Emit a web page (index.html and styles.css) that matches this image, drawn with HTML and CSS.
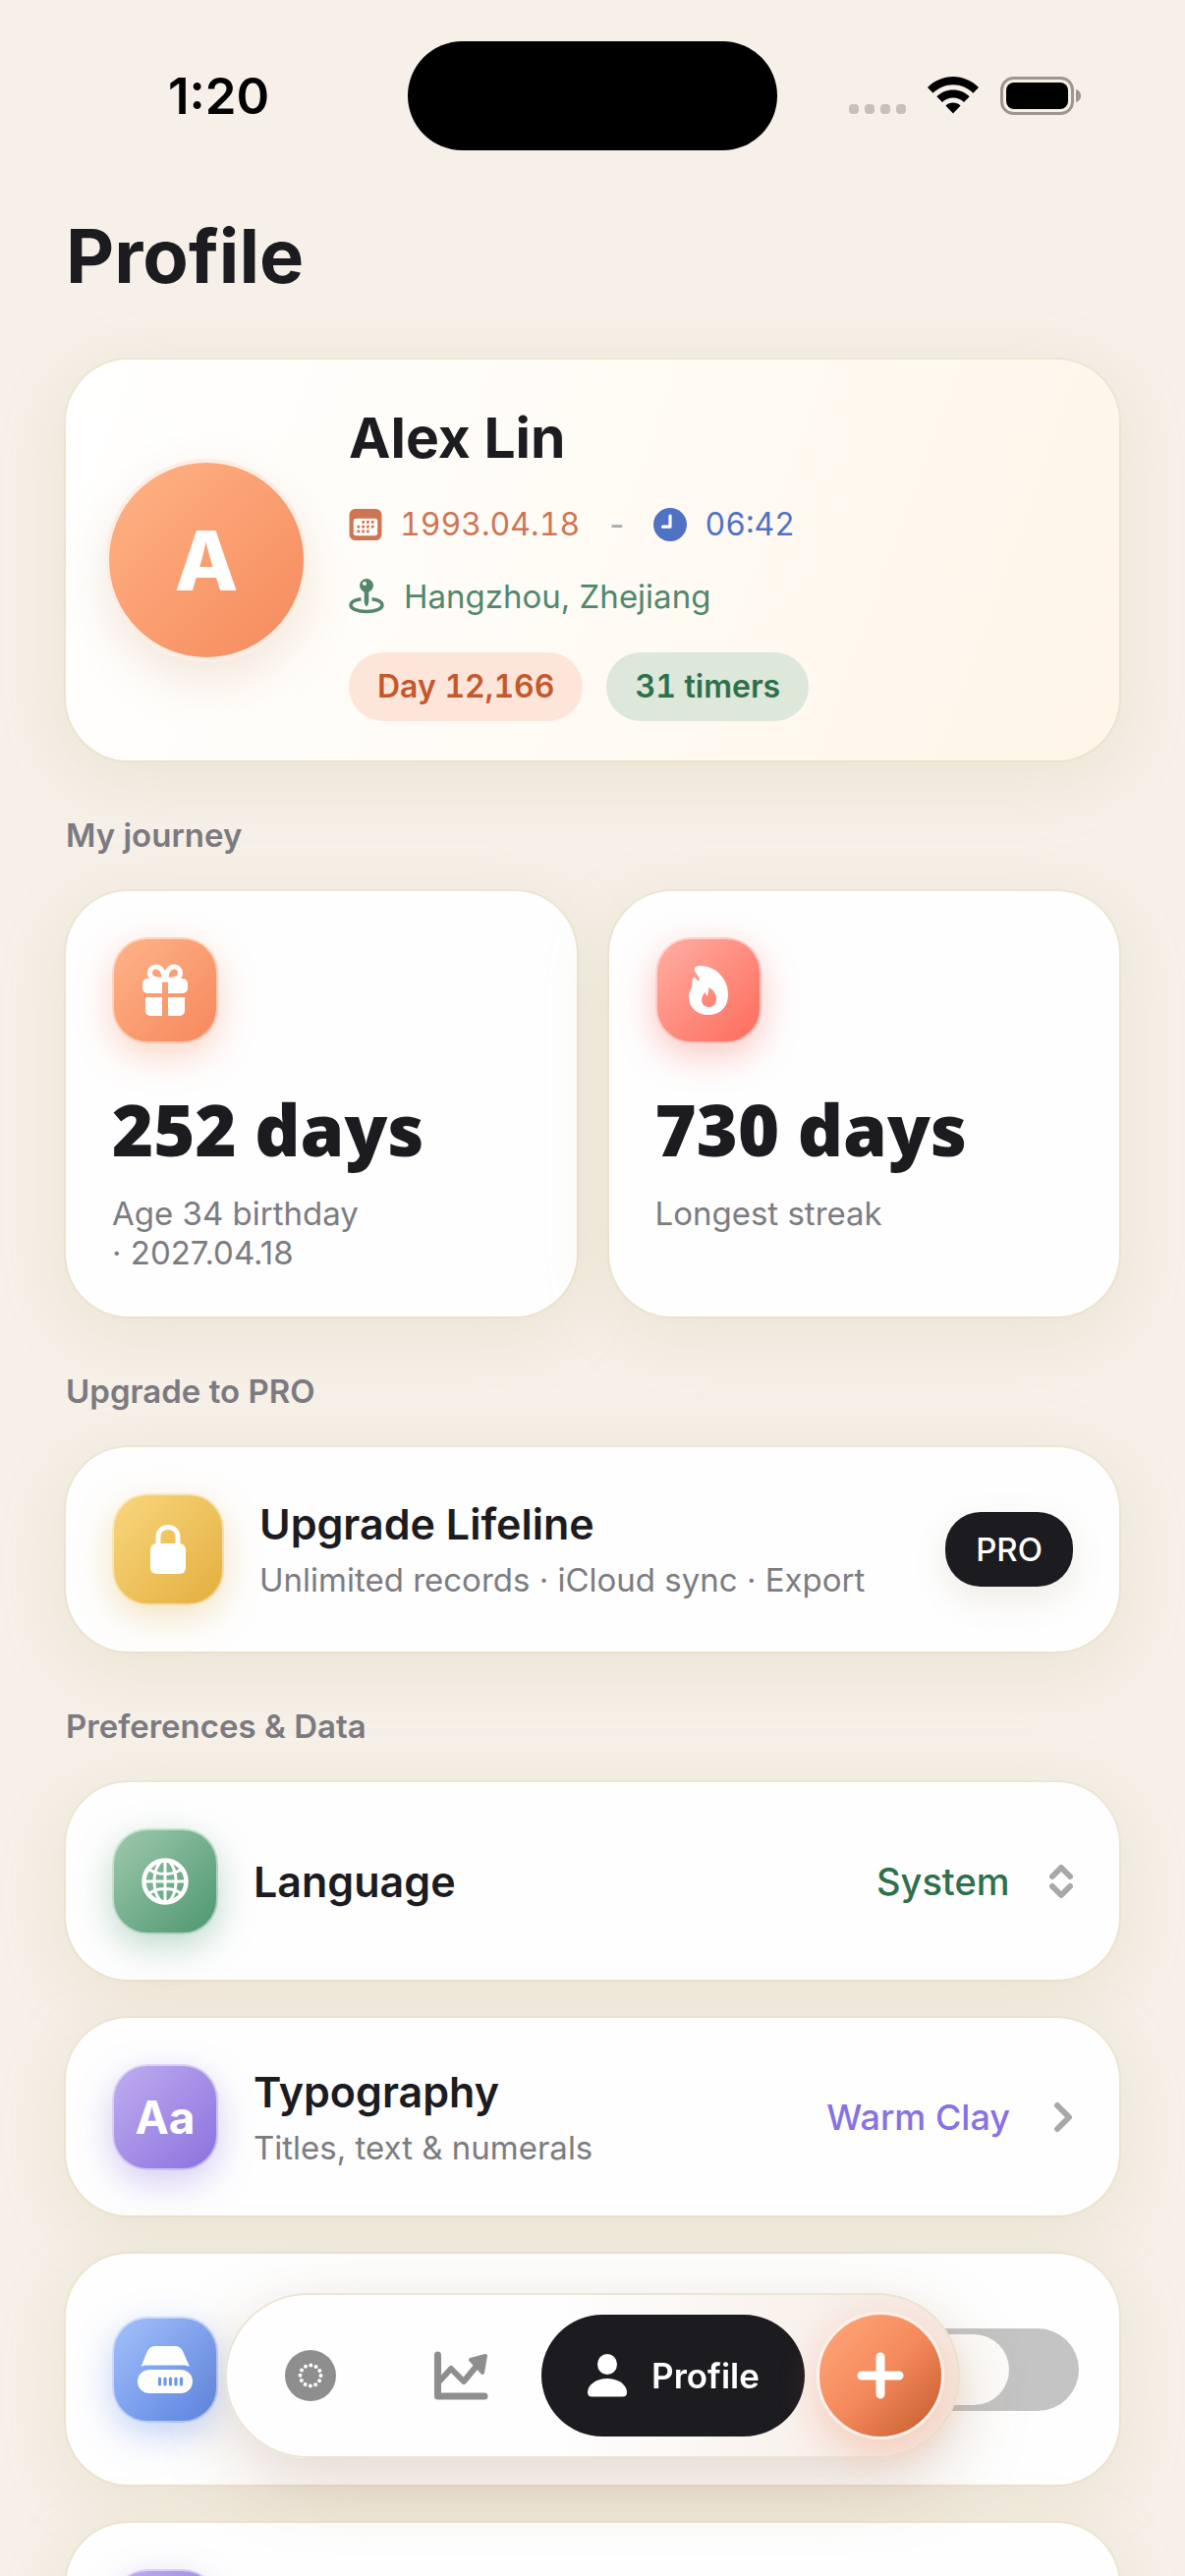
FILE: index.html
```html
<!DOCTYPE html>
<html lang="en">
<head>
    <meta charset="UTF-8">
    <meta name="viewport" content="width=device-width, initial-scale=1.0">
    <title>Profile - Lifeline</title>
    <link rel="stylesheet" href="styles.css">
</head>
<body>
    <div class="screen">
        <div class="status-bar">
            <span class="status-time">1:20</span>
            <span class="island"></span>
            <span class="status-icons">
                <span class="signal"><i></i><i></i><i></i><i></i></span>
                <svg class="wifi" viewBox="0 0 52 38">
                    <path d="M26 0C16 0 7 4 0 11l5.600 5.800C11 11.500 18.300 8.300 26 8.300s15 3.200 20.400 8.500L52 11C45 4 36 0 26 0z"/>
                    <path d="M26 13.500c-6.500 0-12.300 2.500-16.700 6.700l5.700 5.700c2.900-2.800 6.800-4.400 11-4.400s8.100 1.600 11 4.400l5.700-5.700c-4.400-4.200-10.200-6.700-16.700-6.700z"/>
                    <path d="M26 26.500c-3 0-5.600 1.100-7.600 3L26 37.500l7.600-8c-2-1.900-4.600-3-7.600-3z"/>
                </svg>
                <svg class="battery" viewBox="0 0 83 39">
                    <rect x="1.500" y="1.500" width="72" height="36" rx="12" fill="none" stroke="#9b968f" stroke-width="3"/>
                    <rect x="6" y="6" width="63" height="27" rx="8"/>
                    <path d="M77 13c3.500 1 5 3.500 5 6.500s-1.500 5.500-5 6.500z" fill="#9b968f"/>
                </svg>
            </span>
        </div>

        <main class="content">
            <h1 class="page-title">Profile</h1>

            <section class="card profile-card">
                <div class="avatar">A</div>
                <div class="profile-info">
                    <h2 class="profile-name">Alex Lin</h2>
                    <div class="meta-row">
                        <span class="meta date">
                            <svg viewBox="0 0 32 32" width="34" height="34">
                                <path fill-rule="evenodd" d="M6 1h20a5.500 5.500 0 0 1 5.500 5.500v19A5.500 5.500 0 0 1 26 31H6a5.500 5.500 0 0 1-5.500-5.500v-19A5.500 5.500 0 0 1 6 1zm1 9a2.500 2.500 0 0 0-2.500 2.500V24A2.500 2.500 0 0 0 7 26.500h18a2.500 2.500 0 0 0 2.500-2.500V12.500A2.500 2.500 0 0 0 25 10z"/>
                                <path d="M12.500 13.500H25M8 18h17M8 22.500h13" fill="none" stroke="currentColor" stroke-width="2.500" stroke-dasharray="2.500 2"/>
                            </svg>
                            1993.04.18
                        </span>
                        <span class="dash">-</span>
                        <span class="meta time">
                            <svg viewBox="0 0 32 32" width="34" height="34">
                                <circle cx="16" cy="16" r="16"/>
                                <path d="M16 7.500V18H9" fill="none" stroke="#fff" stroke-width="3" stroke-linecap="round" stroke-linejoin="round"/>
                            </svg>
                            06:42
                        </span>
                    </div>
                    <div class="meta-row">
                        <span class="meta place">
                            <svg viewBox="0 0 36 36" width="36" height="36">
                                <path fill-rule="evenodd" d="M18 0a7 7 0 0 1 2.300 13.600V23c0 2-1 4.500-2.300 5.500-1.300-1-2.300-3.500-2.300-5.500v-9.400A7 7 0 0 1 18 0zm-2 3a2 2 0 1 0 0 4 2 2 0 0 0 0-4z"/>
                                <path d="M12.500 20.800C6 21.600 2 24 2 27c0 3.900 7 6.500 16 6.500s16-2.600 16-6.500c0-3-4-5.400-10.500-6.200" fill="none" stroke="currentColor" stroke-width="3.500"/>
                            </svg>
                            Hangzhou, Zhejiang
                        </span>
                    </div>
                    <div class="badges">
                        <span class="badge badge-day">Day 12,166</span>
                        <span class="badge badge-timers">31 timers</span>
                    </div>
                </div>
            </section>

            <h3 class="section-label">My journey</h3>
            <section class="journey">
                <div class="card stat">
                    <span class="icon orange">
                        <svg viewBox="0 0 48 54" width="48" height="54">
                            <path d="M23 16C16 17 8.500 15.500 8.500 9.500c0-3.800 2.800-6.500 6.300-6.500C20 3 23 8 23 16zM25 16c7 1 14.500-.5 14.500-6.500C39.500 5.700 36.700 3 33.200 3 28 3 25 8 25 16z" fill="none" stroke="#fff" stroke-width="5"/>
                            <path d="M6 15h15v15H6a5 5 0 0 1-5-5v-5a5 5 0 0 1 5-5zM27 15h15a5 5 0 0 1 5 5v5a5 5 0 0 1-5 5H27zM4 34h17v19H9a5 5 0 0 1-5-5zM27 34h17v14a5 5 0 0 1-5 5H27z"/>
                        </svg>
                    </span>
                    <p class="stat-value">252 days</p>
                    <p class="sub">Age 34 birthday<br>· 2027.04.18</p>
                </div>
                <div class="card stat">
                    <span class="icon red">
                        <svg viewBox="0 0 42 52" width="42" height="52">
                            <path fill-rule="evenodd" d="M11 1c16-1 30 12 30 29 0 13-8 21-20 21S1 43 1 33c0-5 2-8 3-10 1-4 0-7 1-9 1-2 3-1 4 1l3 2c0-4-2-6-4-9S6 2 11 1zm10 22c1 4-1 6-1 9-1-1-2-2-2-4-2 1-4 5-4 8 0 4 3 7 7.500 7s7.500-3 7.500-8-3-10-8-12z"/>
                        </svg>
                    </span>
                    <p class="stat-value">730 days</p>
                    <p class="sub">Longest streak</p>
                </div>
            </section>

            <h3 class="section-label">Upgrade to PRO</h3>
            <section class="card row upgrade">
                <span class="icon yellow">
                    <svg viewBox="0 0 36 50" width="36" height="50">
                        <path d="M8 22V13c0-6.500 4-10.500 10-10.500S28 6.500 28 13v9" fill="none" stroke="#fff" stroke-width="5"/>
                        <rect x="0" y="19" width="36" height="31" rx="6"/>
                    </svg>
                </span>
                <div class="row-text">
                    <h4 class="row-title">Upgrade Lifeline</h4>
                    <p class="sub">Unlimited records · iCloud sync · Export</p>
                </div>
                <button class="pro-btn" type="button">PRO</button>
            </section>

            <h3 class="section-label">Preferences &amp; Data</h3>
            <section class="settings">
                <div class="card row">
                    <span class="icon green">
                        <svg viewBox="0 0 48 48" width="48" height="48" fill="none" stroke="#fff" stroke-width="3">
                            <circle cx="24" cy="24" r="21.500" stroke-width="4.500"/>
                            <ellipse cx="24" cy="24" rx="11" ry="21.500"/>
                            <path d="M24 2v44M2 24h44M7 11c4.500 4 11 5.500 17 5.500S36.500 15 41 11M7 37c4.500-4 11-5.500 17-5.500S36.500 33 41 37"/>
                        </svg>
                    </span>
                    <div class="row-text">
                        <label class="row-title" for="language">Language</label>
                    </div>
                    <select class="value-select" id="language">
                        <option>System</option>
                    </select>
                    <svg class="arrow" viewBox="0 0 24 34" width="24" height="34"><path d="M3 12l9-9 9 9M3 22l9 9 9-9"/></svg>
                </div>

                <div class="card row">
                    <span class="icon purple">Aa</span>
                    <div class="row-text">
                        <h4 class="row-title">Typography</h4>
                        <p class="sub">Titles, text &amp; numerals</p>
                    </div>
                    <a class="value-link" href="#typography">Warm Clay</a>
                    <svg class="arrow" viewBox="0 0 24 34" width="24" height="34"><path d="M8 5l12 12L8 29"/></svg>
                </div>

                <div class="card row tall">
                    <span class="icon blue">
                        <svg viewBox="0 0 56 48" width="56" height="48">
                            <path d="M18 0h20c4 0 6.500 2 8 5l7 16c-2-1-4-1.500-7-1.500H10c-3 0-4.500.5-6.500 1.500L10 5c1.500-3 4-5 8-5z"/>
                            <rect x="0" y="24" width="56" height="24" rx="12"/>
                            <path d="M22.500 33v6M28 33v6M33.500 33v6M39 33v6M44.500 33v6" stroke="#6f98ee" stroke-width="3.200" stroke-linecap="round"/>
                        </svg>
                    </span>
                    <div class="row-text"></div>
                    <input class="toggle" type="checkbox" aria-label="iCloud sync">
                </div>

                <div class="card row tall top">
                    <span class="icon purple"></span>
                </div>
            </section>
        </main>

        <nav class="tab-bar">
            <button class="tab" type="button" aria-label="Timers">
                <svg viewBox="0 0 52 52" width="52" height="52">
                    <circle cx="26" cy="26" r="26" fill="#8e8e8e"/>
                    <circle cx="26" cy="26" r="10.500" fill="none" stroke="#fff" stroke-width="4" stroke-linecap="round" stroke-dasharray="0 5.498"/>
                </svg>
            </button>
            <button class="tab" type="button" aria-label="Statistics">
                <svg viewBox="0 0 56 50" width="56" height="50">
                    <path d="M4.500 4v42H52" fill="none" stroke="#8e8e8e" stroke-width="7" stroke-linecap="round" stroke-linejoin="round"/>
                    <path d="M6 31l12-13 13 13 14-17" fill="none" stroke="#8e8e8e" stroke-width="6" stroke-linejoin="round"/>
                    <path d="M38 9l15-4-3 17z" fill="#8e8e8e" stroke="#8e8e8e" stroke-width="4" stroke-linejoin="round"/>
                </svg>
            </button>
            <button class="tab active" type="button">
                <svg viewBox="0 0 42 44" width="42" height="44">
                    <ellipse cx="21" cy="10.500" rx="10" ry="10.500"/>
                    <path d="M1 39c0-7 8-14 20-14s20 7 20 14c0 3-1.500 4.500-4.500 4.500h-31C2.500 43.500 1 42 1 39z"/>
                </svg>
                Profile
            </button>
            <button class="add-btn" type="button" aria-label="Add">
                <svg viewBox="0 0 48 48" width="48" height="48"><path d="M24 5v38M5 24h38"/></svg>
            </button>
        </nav>
    </div>
</body>
</html>
```

FILE: styles.css
```css
* {
    margin: 0;
    padding: 0;
    box-sizing: border-box;
}

body {
    font-family: Inter, "Liberation Sans", sans-serif;
    background: #f6f0e8;
    color: #1c1b1f;
}

button,
select {
    font-family: inherit;
    border: none;
    cursor: pointer;
}

svg {
    display: block;
    flex-shrink: 0;
}

.screen {
    height: 100vh;
    overflow: hidden;
}

/* Status bar */
.status-bar {
    display: grid;
    grid-template-columns: 1fr 376px 1fr;
    align-items: center;
    height: 194px;
    color: #000;
}

.status-time {
    text-align: center;
    font-size: 51px;
    font-weight: 600;
    padding-left: 30px;
}

.island {
    height: 111px;
    border-radius: 56px;
    background: #000;
}

.status-icons {
    display: flex;
    align-items: center;
    justify-content: flex-end;
    gap: 22px;
    padding-right: 105px;
}

.signal {
    display: flex;
    gap: 6px;
    padding-top: 28px;
}

.signal i {
    width: 10px;
    height: 10px;
    border-radius: 4px;
    background: #c5c0ba;
}

.wifi {
    width: 52px;
    height: 38px;
}

.battery {
    width: 83px;
    height: 39px;
}

/* Content */
.content {
    padding: 0 67px;
}

.page-title {
    font-size: 76px;
    font-weight: 700;
    line-height: 96px;
    padding: 18px 0 58px;
}

.section-label {
    font-size: 33px;
    font-weight: 600;
    line-height: 40px;
    margin: 56px 0 37px;
    color: #7c7a80;
}

.sub {
    font-size: 33px;
    line-height: 40px;
    color: #7c7c80;
}

.card {
    background: #fefefe;
    border-radius: 64px;
    box-shadow: 0 0 0 2px rgba(226, 214, 178, 0.3), 0 16px 64px rgba(205, 187, 138, 0.25);
}

/* Profile card */
.profile-card {
    display: flex;
    align-items: center;
    gap: 42px;
    padding: 40px;
    background: linear-gradient(110deg, #fff 0%, #fffcf7 40%, #fff5e8 100%);
}

.avatar {
    display: flex;
    align-items: center;
    justify-content: center;
    width: 206px;
    height: 206px;
    flex-shrink: 0;
    border: 4px solid #fdeee5;
    border-radius: 50%;
    background: linear-gradient(135deg, #ffb386, #f58a5c);
    box-shadow: 0 20px 48px rgba(200, 150, 110, 0.22);
    color: #fff;
    font-size: 84px;
    font-weight: 800;
}

.profile-name {
    font-size: 57px;
    font-weight: 700;
    line-height: 80px;
    margin-bottom: 28px;
}

.meta-row {
    display: flex;
    align-items: center;
    gap: 30px;
    margin-bottom: 33px;
    font-size: 33px;
    line-height: 40px;
}

.meta {
    display: flex;
    align-items: center;
    gap: 20px;
}

.meta svg {
    fill: currentColor;
}

.date,
.time {
    gap: 18px;
    font-size: 32px;
    font-variant-numeric: tabular-nums;
}

.date {
    color: #cc7654;
}

.dash {
    color: #aaa;
}

.time {
    color: #5072c4;
}

.place {
    color: #52876c;
}

.badges {
    display: flex;
    gap: 24px;
    padding-top: 4px;
}

.badge {
    padding: 0 29px;
    border-radius: 35px;
    font-size: 32px;
    font-weight: 600;
    line-height: 70px;
    font-variant-numeric: tabular-nums;
}

.badge-day {
    background: #fde5da;
    color: #c4582d;
}

.badge-timers {
    background: #dde7da;
    color: #2e704c;
}

/* Icon tiles */
.icon {
    display: flex;
    align-items: center;
    justify-content: center;
    width: 108px;
    height: 108px;
    flex-shrink: 0;
    border: 2px solid rgba(255, 255, 255, 0.5);
    border-radius: 36px;
    background-origin: border-box;
    color: #fff;
    font-size: 46px;
    font-weight: 700;
}

.icon svg {
    fill: #fff;
}

.icon.green svg {
    fill: none;
}

.orange {
    background-image: linear-gradient(135deg, #ffb48a, #f5875b);
    box-shadow: 0 12px 36px rgba(245, 135, 91, 0.35);
}

.red {
    background-image: linear-gradient(135deg, #ffb0a4, #fd6a5a);
    box-shadow: 0 12px 36px rgba(240, 100, 85, 0.35);
}

.yellow {
    background-image: linear-gradient(135deg, #f9d77e, #e3ae3e);
    box-shadow: 0 12px 36px rgba(227, 174, 80, 0.35);
}

.green {
    background-image: linear-gradient(135deg, #9fcaae, #4c966e);
    box-shadow: 0 12px 36px rgba(76, 150, 110, 0.35);
}

.purple {
    background-image: linear-gradient(135deg, #c0aef0, #8a70de);
    box-shadow: 0 12px 36px rgba(138, 112, 222, 0.35);
}

.blue {
    background-image: linear-gradient(135deg, #a5c1f9, #5983e4);
    box-shadow: 0 12px 36px rgba(89, 131, 228, 0.35);
}

/* Journey */
.journey {
    display: grid;
    grid-template-columns: 1fr 1fr;
    gap: 33px;
}

.stat {
    padding: 47px 47px 45px;
}

.stat-value {
    margin: 47px 0 26px;
    font-family: "Open Sans", "Noto Sans", sans-serif;
    font-size: 72px;
    font-weight: 800;
    line-height: 80px;
}

/* Rows */
.row {
    display: flex;
    align-items: center;
    min-height: 201px;
    padding: 0 47px;
}

.row-text {
    flex: 1;
    padding-left: 36px;
}

.row-title {
    display: block;
    font-size: 43px;
    font-weight: 600;
    line-height: 50px;
}

.row-title + .sub {
    margin-top: 12px;
}

.upgrade {
    min-height: 208px;
}

.upgrade .icon {
    width: 114px;
    height: 114px;
}

.pro-btn {
    height: 76px;
    padding: 0 31px;
    border-radius: 36px;
    background: #1c1b1f;
    box-shadow: 0 12px 36px rgba(120, 100, 60, 0.12);
    color: #fff;
    font-size: 33px;
    font-weight: 500;
}

.settings {
    display: flex;
    flex-direction: column;
    gap: 39px;
}

.value-select,
.value-link {
    appearance: none;
    background: none;
    font-size: 38px;
    font-weight: 500;
    text-decoration: none;
}

.value-select {
    color: #2e704c;
}

.value-link {
    font-size: 36px;
    color: #8672e2;
}

.arrow {
    margin-left: 40px;
    fill: none;
    stroke: #a8a8a8;
    stroke-width: 6;
    stroke-linecap: round;
    stroke-linejoin: round;
}

.tall {
    min-height: 235px;
}

.top {
    align-items: flex-start;
    padding-top: 47px;
}

.toggle {
    appearance: none;
    display: flex;
    align-items: center;
    width: 189px;
    height: 84px;
    margin-right: -6px;
    padding: 6px;
    border-radius: 42px;
    background: #c4c4c4;
}

.toggle::before {
    content: "";
    width: 112px;
    height: 72px;
    border-radius: 36px;
    background: #fdfcfa;
}

.toggle:checked {
    justify-content: flex-end;
    background: #4c966e;
}

/* Tab bar */
.tab-bar {
    position: fixed;
    bottom: 120px;
    left: 50%;
    transform: translateX(-50%);
    display: flex;
    align-items: center;
    gap: 12px;
    height: 168px;
    padding: 0 14px;
    border: 2px solid #ebe5d5;
    border-radius: 84px;
    background: linear-gradient(90deg, #fefefe 45%, #f9f3ee 75%, #f7e8e0);
    box-shadow: 0 24px 72px rgba(150, 110, 70, 0.26);
}

.tab {
    display: flex;
    align-items: center;
    justify-content: center;
    gap: 24px;
    width: 141px;
    height: 124px;
    border-radius: 62px;
    background: none;
    font-size: 35px;
    font-weight: 600;
}

.tab.active {
    width: 268px;
    background: #1c1b1f;
    color: #fff;
    fill: #fff;
}

.add-btn {
    display: flex;
    align-items: center;
    justify-content: center;
    width: 130px;
    height: 130px;
    border: 3px solid #fdf0ea;
    border-radius: 50%;
    background: linear-gradient(135deg, #ffa87c, #f58a5c 50%, #c25a2c);
    box-shadow: 0 14px 40px rgba(235, 125, 85, 0.3);
}

.add-btn svg {
    stroke: #fff;
    stroke-width: 9;
    stroke-linecap: round;
}
```
